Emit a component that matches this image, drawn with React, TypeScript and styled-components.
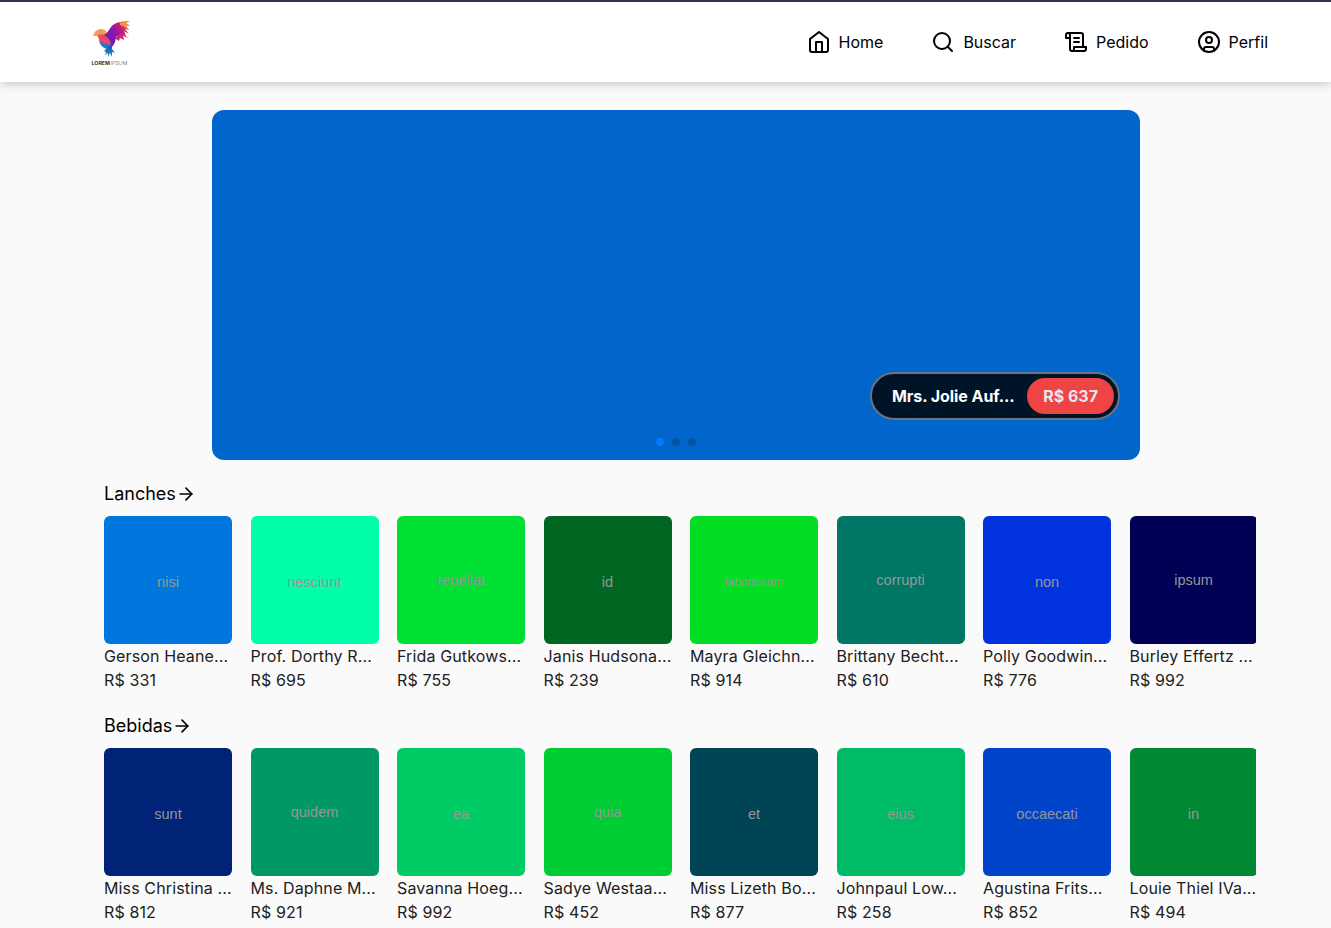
import React from "react";
import styled, { createGlobalStyle } from "styled-components";

const GlobalStyle = createGlobalStyle`
  *, *::before, *::after { box-sizing: border-box; }
  html, body { margin: 0; height: 100%; overflow: hidden; }
  body {
    background: #fafafa;
    color: #000;
    font-family: Inter, "Liberation Sans", sans-serif;
    font-size: 16px;
    line-height: 24px;
  }
  h2, p { margin: 0; font-weight: 400; }
`;

const Page = styled.div`
  height: 928px;
  overflow: hidden;
  background: #fafafa;
`;

const Header = styled.header`
  display: flex;
  align-items: center;
  justify-content: space-between;
  height: 82px;
  padding: 0 63px 0 76px;
  border-top: 2px solid #2d3748;
  background: #fff;
  box-shadow: 0 1px 10px rgba(0, 0, 0, 0.25);
`;

const Logo = styled.a`
  display: flex;
  width: 70px;
  height: 70px;
  border: 1px solid #fcfcfc;
`;

const Nav = styled.nav`
  display: flex;
  gap: 48px;
`;

const NavLink = styled.a`
  display: flex;
  align-items: center;
  gap: 8px;
`;

const Main = styled.main`
  padding: 28px 75px 0 104px;
`;

const Banner = styled.section`
  display: flex;
  flex-direction: column;
  align-items: flex-end;
  justify-content: flex-end;
  width: 928px;
  height: 350px;
  margin-left: 108px;
  padding: 0 20px 14px;
  border-radius: 12px;
  background: #0066cc;
`;

const Offer = styled.div`
  display: flex;
  align-items: center;
  justify-content: space-between;
  width: 250px;
  height: 48px;
  padding: 0 4px 0 20px;
  border: 2px solid #6b7280;
  border-radius: 24px;
  background: #001427;
  color: #fff;
  font-weight: 700;
`;

const OfferName = styled.span`
  letter-spacing: -0.06px;
`;

const OfferPrice = styled.span`
  padding: 6px 16px;
  border-radius: 18px;
  background: #ef4444;
  color: #e5e7eb;
`;

const Dots = styled.div`
  display: flex;
  align-self: center;
  gap: 8px;
  margin-top: 18px;
`;

const Dot = styled.span<{ $active?: boolean }>`
  width: 8px;
  height: 8px;
  border-radius: 50%;
  background: ${(p) => (p.$active ? "#007aff" : "#0052a3")};
`;

const Category = styled.section`
  margin-top: 20px;
`;

const CategoryTitle = styled.h2`
  display: flex;
  align-items: center;
  height: 28px;
  margin-bottom: 8px;
  font-size: 18px;
  line-height: 28px;
`;

const Track = styled.div`
  display: flex;
  gap: 18.5px;
  overflow: hidden;
`;

const Card = styled.article`
  flex: none;
  width: 128px;
  height: 176px;
  color: #212121;
  white-space: nowrap;
`;

const Thumb = styled.div<{ $color: string; $size?: number; $raised?: boolean }>`
  display: flex;
  align-items: center;
  justify-content: center;
  height: 128px;
  padding-top: ${(p) => (p.$raised ? 0 : 3)}px;
  border-radius: 6px;
  background: ${(p) => p.$color};
  color: #969696;
  font-family: "Liberation Sans", Arial, sans-serif;
  font-size: ${(p) => p.$size ?? 14.5}px;
`;

const ItemText = styled.p`
  letter-spacing: 0.13px;
`;

type Product = {
  word: string;
  color: string;
  name: string;
  price: number;
  raised?: boolean;
  size?: number;
};

const categories: { title: string; items: Product[] }[] = [
  {
    title: "Lanches",
    items: [
      { word: "nisi", color: "#0077dd", name: "Gerson Heane...", price: 331 },
      { word: "nesciunt", color: "#00ffaa", name: "Prof. Dorthy R...", price: 695 },
      { word: "repellat", color: "#00e033", name: "Frida Gutkows...", price: 755, raised: true },
      { word: "id", color: "#006622", name: "Janis Hudsona...", price: 239 },
      { word: "laboriosam", color: "#00dd22", name: "Mayra Gleichn...", price: 914, size: 11.9 },
      { word: "corrupti", color: "#007766", name: "Brittany Becht...", price: 610, raised: true },
      { word: "non", color: "#0033dd", name: "Polly Goodwin...", price: 776 },
      { word: "ipsum", color: "#000055", name: "Burley Effertz ...", price: 992, raised: true },
    ],
  },
  {
    title: "Bebidas",
    items: [
      { word: "sunt", color: "#002277", name: "Miss Christina ...", price: 812 },
      { word: "quidem", color: "#009966", name: "Ms. Daphne M...", price: 921, raised: true },
      { word: "ea", color: "#00cc66", name: "Savanna Hoeg...", price: 992 },
      { word: "quia", color: "#00cc33", name: "Sadye Westaa...", price: 452, raised: true },
      { word: "et", color: "#004455", name: "Miss Lizeth Bo...", price: 877 },
      { word: "eius", color: "#00bb66", name: "Johnpaul Low...", price: 258 },
      { word: "occaecati", color: "#0044cc", name: "Agustina Frits...", price: 852 },
      { word: "in", color: "#008833", name: "Louie Thiel IVa...", price: 494 },
    ],
  },
];

function Icon({ size = 24, children }: { size?: number; children: React.ReactNode }) {
  return (
    <svg
      width={size}
      height={size}
      viewBox="0 0 24 24"
      fill="none"
      stroke="currentColor"
      strokeWidth="2"
      strokeLinecap="round"
      strokeLinejoin="round"
    >
      {children}
    </svg>
  );
}

function BirdLogo() {
  return (
    <svg width="68" height="68" viewBox="77 8 68 68">
      <defs>
        <linearGradient id="wing" x1="0" y1="0.8" x2="1" y2="0.1">
          <stop offset="0" stopColor="#5a1fb4" />
          <stop offset="0.45" stopColor="#8a16ac" />
          <stop offset="0.75" stopColor="#cf2668" />
          <stop offset="1" stopColor="#ffb52e" />
        </linearGradient>
        <linearGradient id="tail" x1="0" y1="0" x2="0" y2="1">
          <stop offset="0" stopColor="#3b35a8" />
          <stop offset="1" stopColor="#00a5cf" />
        </linearGradient>
      </defs>
      <path fill="#f79a58" d="M93 36c1-4 4-7 8-7 4 0 6 3 7 5l-4 5-5 1c0-3-2-5-6-4z" />
      <path fill="#e8476a" d="M98 35c3-1 7 0 9-2l5 6-2 9c-6 0-11-5-12-13z" />
      <path fill="#2877cc" d="M99 40c3 3 6 4 9 4l4 1-3 4c-5 0-9-3-10-9z" />
      <path
        fill="url(#wing)"
        d="M104 35c4-1 5-7 9-10s10-4 17-4l-4 2 4 3-4 0 3 4-4-1 4 5-5-3 2 5-4-2 0 3-3-2-1 2-2-1c0 4-1 8-5 12 1-6-2-10-7-13z"
      />
      <path fill="#f5943f" d="M120 23c3-2 7-2 10-2l-4 2 4 3-4 0 3 4-4-3-5-2z" />
      <path fill="#d12670" d="M116 37l5-4 8 5-6-2 1 4-4-2-1 3-3-2z" />
      <path fill="url(#tail)" d="M112 43l0 6 3 4-3-1 0 5-2-4-2 4 0-4-3 2 1-3-2-1 4-4z" />
      <text x="91.5" y="65" fontFamily="Inter, sans-serif" fontSize="5.3" fill="#222">
        <tspan fontWeight="600">LOREM</tspan>
        <tspan fontWeight="300" dx="0.6" fill="#555">IPSUM</tspan>
      </text>
    </svg>
  );
}

export default function App() {
  return (
    <Page>
      <GlobalStyle />
      <Header>
        <Logo>
          <BirdLogo />
        </Logo>
        <Nav>
          <NavLink>
            <Icon>
              <path d="m3 9 9-7 9 7v11a2 2 0 0 1-2 2H5a2 2 0 0 1-2-2z" />
              <polyline points="9 22 9 12 15 12 15 22" />
            </Icon>
            Home
          </NavLink>
          <NavLink>
            <Icon>
              <circle cx="11" cy="11" r="8" />
              <path d="m21 21-4.3-4.3" />
            </Icon>
            Buscar
          </NavLink>
          <NavLink>
            <Icon>
              <path d="M8 21h12a2 2 0 0 0 2-2v-2H10v2a2 2 0 1 1-4 0V5a2 2 0 1 0-4 0v3h4" />
              <path d="M19 17V5a2 2 0 0 0-2-2H4" />
              <path d="M15 8h-5" />
              <path d="M15 12h-5" />
            </Icon>
            Pedido
          </NavLink>
          <NavLink>
            <Icon>
              <circle cx="12" cy="12" r="10" />
              <circle cx="12" cy="10" r="3" />
              <path d="M7 20.662V19a2 2 0 0 1 2-2h6a2 2 0 0 1 2 2v1.662" />
            </Icon>
            Perfil
          </NavLink>
        </Nav>
      </Header>
      <Main>
        <Banner>
          <Offer>
            <OfferName>Mrs. Jolie Auf...</OfferName>
            <OfferPrice>R$ 637</OfferPrice>
          </Offer>
          <Dots>
            <Dot $active />
            <Dot />
            <Dot />
          </Dots>
        </Banner>
        {categories.map((category) => (
          <Category key={category.title}>
            <CategoryTitle>
              {category.title}
              <Icon size={20}>
                <path d="M5 12h14" />
                <path d="m12 5 7 7-7 7" />
              </Icon>
            </CategoryTitle>
            <Track>
              {category.items.map((item) => (
                <Card key={item.name}>
                  <Thumb $color={item.color} $size={item.size} $raised={item.raised}>
                    {item.word}
                  </Thumb>
                  <ItemText>{item.name}</ItemText>
                  <ItemText>R$ {item.price}</ItemText>
                </Card>
              ))}
            </Track>
          </Category>
        ))}
      </Main>
    </Page>
  );
}
